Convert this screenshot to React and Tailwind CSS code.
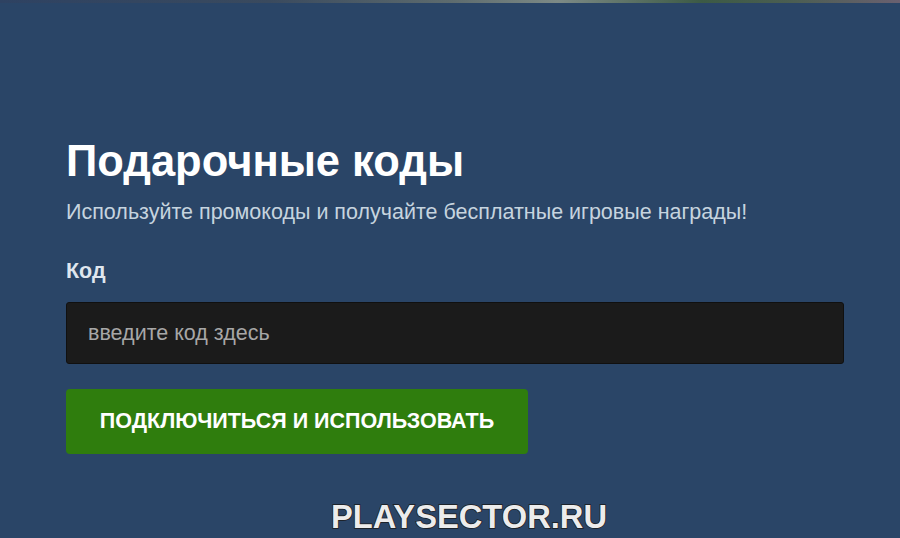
import React, { useState } from 'react';

const font = { fontFamily: '"Liberation Sans", Arial, sans-serif' };

export default function App() {
  const [code, setCode] = useState('');

  return (
    <div className="relative h-[538px] w-[900px] overflow-hidden bg-[#2a4567]" style={font}>
      {/* banner image edge peeking in at the top */}
      <div className="h-[3px] w-full bg-[linear-gradient(90deg,#2e4262_0%,#3a4a5e_30%,#5d6b6e_50%,#7d8a86_62%,#3c5a45_78%,#4b5e52_88%,#6a6070_100%)]" />

      <div className="pl-[66px] pr-[56px] pt-[133px]">
        <h1 className="text-[43.5px] font-bold leading-[50px] text-white">Подарочные коды</h1>
        <p className="mt-[13px] text-[21.5px] leading-[26px] text-[#c6d4df]">
          Используйте промокоды и получайте бесплатные игровые награды!
        </p>

        <label className="mt-[33px] block text-[21.5px] font-bold leading-[26px] text-[#dfe6ee]">Код</label>
        <input
          value={code}
          onChange={(e) => setCode(e.target.value)}
          placeholder="введите код здесь"
          className="mt-[18px] block h-[62px] w-full rounded-[3px] border border-[#101010] bg-[#1b1b1b] px-[21px] text-[21.5px] text-white outline-none placeholder:text-[#a7a7a7]"
        />

        <button className="mt-[25px] flex h-[65px] w-[462px] items-center justify-center rounded-[4px] bg-[#2f7d0d] text-[21.5px] font-bold uppercase text-white">
          Подключиться и использовать
        </button>
      </div>

      <div className="absolute bottom-[1px] left-[38px] right-0 text-center text-[32.7px] font-bold leading-[40px] text-[#ececec] [-webkit-text-stroke:1.5px_#1a1a1a] [paint-order:stroke_fill]">
        PLAYSECTOR.RU
      </div>
    </div>
  );
}
